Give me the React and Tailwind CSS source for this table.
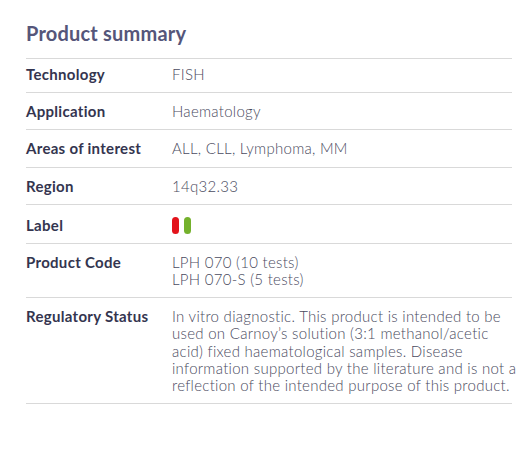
export default function App() {
  const rows = [
    { label: "Technology", value: ["FISH"], first: true },
    { label: "Application", value: ["Haematology"] },
    { label: "Areas of interest", value: ["ALL, CLL, Lymphoma, MM"] },
    { label: "Region", value: ["14q32.33"] },
    { label: "Label", pills: true },
    { label: "Product Code", value: ["LPH 070 (10 tests)", "LPH 070-S (5 tests)"] },
    {
      label: "Regulatory Status",
      value: [
        "In vitro diagnostic. This product is intended to be",
        "used on Carnoy’s solution (3:1 methanol/acetic",
        "acid) fixed haematological samples. Disease",
        "information supported by the literature and is not a",
        "reflection of the intended purpose of this product.",
      ],
    },
  ];
  return (
    <div
      className="w-[523px] h-[455px] bg-white pl-[26px] pr-[11px] pt-[21px]"
      style={{ fontFamily: "Lato, 'Open Sans', sans-serif" }}
    >
      <h2 className="text-[20px] leading-[24px] font-bold text-[#55567a] pb-[13px] tracking-[0.2px]">
        Product summary
      </h2>
      <div className="border-t border-[#d9d9d9]">
        {rows.map((r) => (
          <div
            key={r.label}
            className={`flex border-b border-[#d9d9d9] pb-[9px] ${r.first ? "pt-[7px]" : "pt-[10px]"}`}
          >
            <div
              className={`w-[146px] shrink-0 text-[15px] leading-[17px] font-bold text-[#34354f] tracking-[0.3px] ${r.pills ? "pt-[2px]" : ""}`}
            >
              {r.label}
            </div>
            <div className="flex-1 text-[15px] leading-[17.2px] font-light text-[#4a4b60] tracking-[0.28px] whitespace-nowrap">
              {r.pills ? (
                <div className="flex gap-[5px] pt-[2px]">
                  <span className="block w-[7px] h-[17px] rounded-full bg-[#e3131b]" />
                  <span className="block w-[7px] h-[17px] rounded-full bg-[#74b12c]" />
                </div>
              ) : (
                r.value.map((v, i) => <div key={i}>{v}</div>)
              )}
            </div>
          </div>
        ))}
      </div>
    </div>
  );
}
